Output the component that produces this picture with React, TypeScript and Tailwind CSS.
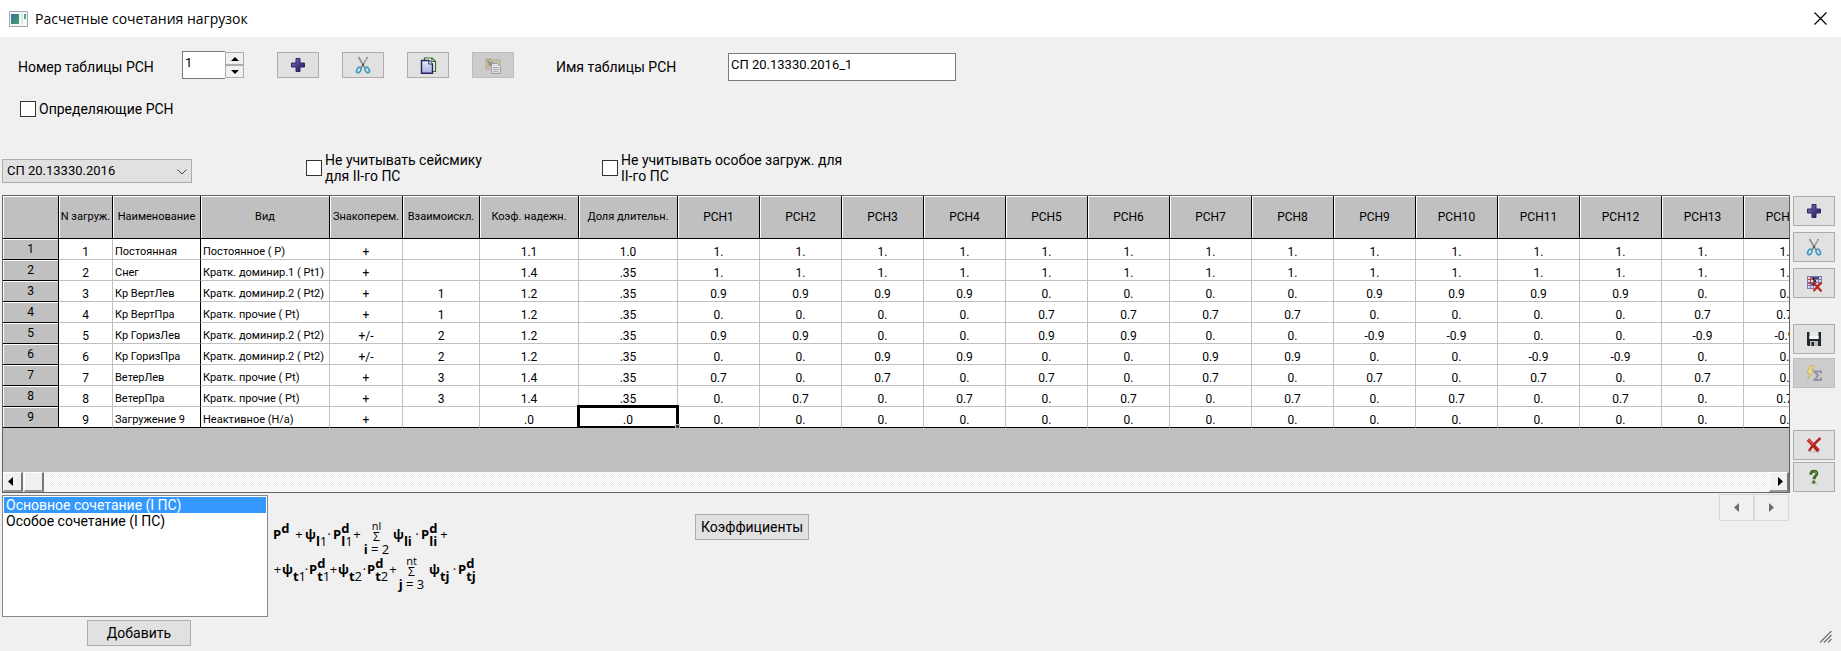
import type { ReactNode } from "react";

const columns = [
  { title: "N загруж.", width: "w-[54px]" },
  { title: "Наименование", width: "w-[88px]" },
  { title: "Вид", width: "w-[129px]" },
  { title: "Знакоперем.", width: "w-[73px]" },
  { title: "Взаимоискл.", width: "w-[77px]" },
  { title: "Коэф. надежн.", width: "w-[99px]" },
  { title: "Доля длительн.", width: "w-[99px]" },
];

const combos = Array.from({ length: 14 }, (_, i) => `РСН${i + 1}`);

const rows = [
  {
    info: ["Постоянная", "Постоянное ( P)", "+", "", "1.1", "1.0"],
    values: ["1.", "1.", "1.", "1.", "1.", "1.", "1.", "1.", "1.", "1.", "1.", "1.", "1.", "1."],
  },
  {
    info: ["Снег", "Кратк. доминир.1 ( Pt1)", "+", "", "1.4", ".35"],
    values: ["1.", "1.", "1.", "1.", "1.", "1.", "1.", "1.", "1.", "1.", "1.", "1.", "1.", "1."],
  },
  {
    info: ["Кр ВертЛев", "Кратк. доминир.2 ( Pt2)", "+", "1", "1.2", ".35"],
    values: ["0.9", "0.9", "0.9", "0.9", "0.", "0.", "0.", "0.", "0.9", "0.9", "0.9", "0.9", "0.", "0."],
  },
  {
    info: ["Кр ВертПра", "Кратк. прочие ( Pt)", "+", "1", "1.2", ".35"],
    values: ["0.", "0.", "0.", "0.", "0.7", "0.7", "0.7", "0.7", "0.", "0.", "0.", "0.", "0.7", "0.7"],
  },
  {
    info: ["Кр ГоризЛев", "Кратк. доминир.2 ( Pt2)", "+/-", "2", "1.2", ".35"],
    values: ["0.9", "0.9", "0.", "0.", "0.9", "0.9", "0.", "0.", "-0.9", "-0.9", "0.", "0.", "-0.9", "-0.9"],
  },
  {
    info: ["Кр ГоризПра", "Кратк. доминир.2 ( Pt2)", "+/-", "2", "1.2", ".35"],
    values: ["0.", "0.", "0.9", "0.9", "0.", "0.", "0.9", "0.9", "0.", "0.", "-0.9", "-0.9", "0.", "0."],
  },
  {
    info: ["ВетерЛев", "Кратк. прочие ( Pt)", "+", "3", "1.4", ".35"],
    values: ["0.7", "0.", "0.7", "0.", "0.7", "0.", "0.7", "0.", "0.7", "0.", "0.7", "0.", "0.7", "0."],
  },
  {
    info: ["ВетерПра", "Кратк. прочие ( Pt)", "+", "3", "1.4", ".35"],
    values: ["0.", "0.7", "0.", "0.7", "0.", "0.7", "0.", "0.7", "0.", "0.7", "0.", "0.7", "0.", "0.7"],
  },
  {
    info: ["Загружение 9", "Неактивное (Н/а)", "+", "", ".0", ".0"],
    values: ["0.", "0.", "0.", "0.", "0.", "0.", "0.", "0.", "0.", "0.", "0.", "0.", "0.", "0."],
  },
];

function PlusIcon() {
  return (
    <svg width="16" height="16" viewBox="0 0 16 16">
      <defs>
        <linearGradient id="plus" x1="0" y1="0" x2="1" y2="1">
          <stop offset="0" stopColor="#8d86c4" />
          <stop offset="0.5" stopColor="#463c86" />
          <stop offset="1" stopColor="#221a52" />
        </linearGradient>
      </defs>
      <path d="M6 1.5h4V6h4.500v4H10v4.500H6V10H1.500V6H6z" fill="url(#plus)" stroke="#2f2765" />
    </svg>
  );
}

function ScissorsIcon() {
  return (
    <svg width="16" height="18" viewBox="0 0 16 18" fill="none">
      <path d="M3.500 1 L10 12" stroke="#8b8f90" strokeWidth="1.600" />
      <path d="M12.500 1 L6 12" stroke="#6e7072" strokeWidth="1.400" />
      <path d="M12 1.500 L8.500 7" stroke="#c9cccc" strokeWidth="0.800" />
      <ellipse cx="3.800" cy="14" rx="1.900" ry="2.900" transform="rotate(28 3.800 14)" stroke="#3f9cc0" strokeWidth="1.700" />
      <ellipse cx="12.200" cy="14" rx="1.900" ry="2.900" transform="rotate(-28 12.200 14)" stroke="#3f9cc0" strokeWidth="1.700" />
      <circle cx="8" cy="9" r="1" fill="#4b4d4e" />
    </svg>
  );
}

function CopyIcon() {
  return (
    <svg width="17" height="17" viewBox="0 0 17 17">
      <defs>
        <linearGradient id="page" x1="0" y1="0" x2="0" y2="1">
          <stop offset="0" stopColor="#e6e8f8" />
          <stop offset="1" stopColor="#a9b4e0" />
        </linearGradient>
      </defs>
      <path d="M4.500 1H12l3.500 3.500v10H4.500z" fill="#f3f7f0" stroke="#2f6b2f" strokeWidth="1.200" />
      <path d="M11.800 1v3.500h3.700" fill="none" stroke="#2f6b2f" />
      <path d="M1.500 3.500H9l3.500 3.500v9.200h-11z" fill="url(#page)" stroke="#262266" strokeWidth="1.400" />
      <path d="M8.800 3.500V7h3.700" fill="#fff" stroke="#262266" />
    </svg>
  );
}

function PasteIcon() {
  return (
    <svg width="17" height="17" viewBox="0 0 17 17">
      <path d="M1 2h5l1 1h8v9H1z" fill="#c9c0a2" stroke="#b3aa90" />
      <path d="M1 1.500h5v1.500H1z" fill="#a9a497" />
      <path d="M2.500 4l4 4M7 4.500V8H3.500" stroke="#777" strokeWidth="1.200" fill="none" />
      <path d="M6.500 6.500h6l3 3v7h-9z" fill="#dfdfe6" stroke="#9c9caa" />
      <path d="M8 10.500h6M8 12.500h6M8 14.500h5" stroke="#a9a9b4" />
    </svg>
  );
}

function TableDeleteIcon() {
  return (
    <svg width="17" height="17" viewBox="0 0 17 17" fill="none">
      <path d="M1 1h14v12H1z" fill="#dcdcec" />
      <path d="M1 1.500h15M1 4.500h15M1 7.500h15M1 10.500h12M1 13.500h7M1.500 1v13M4.500 1v13M7.500 1v13M12.500 1v9M15.500 1v8" stroke="#7c79a8" />
      <path d="M2 4.500h4M4.500 2v7M2 8.500h4" stroke="#d4362c" />
      <path d="M13 3H6.500l3 3-3 3.500H10" stroke="#25214f" strokeWidth="1.500" />
      <path d="M7.500 7.500l8 9M15.500 7.500l-8 8.500" stroke="#b8261c" strokeWidth="2.200" />
    </svg>
  );
}

function SaveIcon() {
  return (
    <svg width="16" height="16" viewBox="0 0 16 16">
      <path d="M1 1h14v14H2l-1-1z" fill="#23262b" />
      <path d="M3.500 1h9v7h-9z" fill="#e4eaec" />
      <path d="M3.500 5h9v3h-9z" fill="#f7f9f9" />
      <path d="M4 10h8v5H4z" fill="#b9c0c4" />
      <path d="M5.500 11h2.500v4H5.500z" fill="#23262b" />
    </svg>
  );
}

function SumIcon() {
  return (
    <svg width="17" height="17" viewBox="0 0 17 17">
      <path d="M4 1h4L5.500 5.500H8L1.500 15l2-7H1z" fill="#f0dc86" stroke="#c5b271" />
      <path d="M15 8.500V6.500H8.500L12 10.500l-3.500 4.500H15V12.500" fill="none" stroke="#9494a2" strokeWidth="2" />
    </svg>
  );
}

function DeleteIcon() {
  return (
    <svg width="18" height="18" viewBox="0 0 18 18" fill="none">
      <ellipse cx="9" cy="15.500" rx="6" ry="1" fill="#c9c9c9" />
      <path d="M3 3.500 L13.500 15" stroke="#b2251d" strokeWidth="3.600" />
      <path d="M15.500 2 C11 6 7 10 4 15" stroke="#b2251d" strokeWidth="2.400" />
      <path d="M3.500 3.500 L8 8.500" stroke="#dd6156" strokeWidth="1.200" />
    </svg>
  );
}

function HelpIcon() {
  return (
    <svg width="16" height="16" viewBox="0 0 16 16" fill="none">
      <ellipse cx="8" cy="14.500" rx="4.500" ry="1" fill="#cbcbcb" />
      <path d="M5 5.800C4.600 3 6 2.200 8 2.200c2.200 0 3 1.200 2.700 2.800C10.400 7 8 7.200 8 10.200" stroke="#3f6b26" strokeWidth="3" />
      <path d="M8.500 2.500c1.500.3 2 1.500 1.200 3" stroke="#86b060" />
      <circle cx="7.800" cy="13" r="1.800" fill="#4c7a30" />
    </svg>
  );
}

function Arrow({ dir, color = "#000" }: { dir: "up" | "down" | "left" | "right"; color?: string }) {
  const points = {
    up: "0,4 4,0 8,4",
    down: "0,0 8,0 4,4",
    left: "5,0 5,9 0,4.5",
    right: "0,0 5,4.5 0,9",
  };
  const vertical = dir === "up" || dir === "down";
  return (
    <svg width={vertical ? 8 : 5} height={vertical ? 4 : 9}>
      <polygon points={points[dir]} fill={color} />
    </svg>
  );
}

function IconButton({
  label,
  disabled = false,
  className = "h-[26px]",
  children,
}: {
  label: string;
  disabled?: boolean;
  className?: string;
  children: ReactNode;
}) {
  return (
    <button
      type="button"
      aria-label={label}
      disabled={disabled}
      className={`flex w-[42px] shrink-0 items-center justify-center border ${
        disabled ? "border-[#bfbfbf] bg-[#cccccc]" : "border-[#adadad] bg-[#e1e1e1]"
      } ${className}`}
    >
      {children}
    </button>
  );
}

function Checkbox({ id, children }: { id: string; children: ReactNode }) {
  return (
    <div className="flex items-center gap-[3px]">
      <input
        id={id}
        type="checkbox"
        className="size-4 shrink-0 appearance-none border border-[#333333] bg-white checked:bg-[#333333]"
      />
      <label htmlFor={id} className="leading-4 whitespace-nowrap">
        {children}
      </label>
    </div>
  );
}

function Term({ base, sup, sub, className }: { base: string; sup?: string; sub?: ReactNode; className: string }) {
  return (
    <span className={`flex shrink-0 items-center font-bold ${className}`}>
      {base}
      <span className="flex h-[26px] flex-col justify-between leading-[13px]">
        <span className="h-[13px]">{sup}</span>
        <span className="h-[13px]">{sub}</span>
      </span>
    </span>
  );
}

function Sum({ top, index, from }: { top: string; index: string; from: string }) {
  return (
    <span className="flex w-[27px] shrink-0 flex-col items-center pt-[6px] text-[11px] leading-[11px]">
      <span>{top}</span>
      <span className="text-xs leading-[12px]">Σ</span>
      <span className="text-[13px] leading-[13px] whitespace-nowrap">
        <b>{index}</b> = {from}
      </span>
    </span>
  );
}

function Op({ children, className }: { children: ReactNode; className: string }) {
  return <span className={`shrink-0 text-center ${className}`}>{children}</span>;
}

function Formula() {
  const n = (v: string) => <span className="font-normal">{v}</span>;
  return (
    <div className="mt-[24px] ml-[5px] w-[210px] font-['Open_Sans',sans-serif] text-[13px]">
      <div className="flex h-[35px] items-center">
        <Term base="P" sup="d" className="w-[20px]" />
        <Op className="w-[12px]">+</Op>
        <Term base="ψ" sub={<>l{n("1")}</>} className="w-[20px]" />
        <Op className="w-[8px]">·</Op>
        <Term base="P" sup="d" sub={<>l{n("1")}</>} className="w-[18px]" />
        <Op className="w-[12px]">+</Op>
        <Sum top="nl" index="i" from="2" />
        <Term base="ψ" sub="li" className="ml-[3px] w-[20px]" />
        <Op className="w-[8px]">·</Op>
        <Term base="P" sup="d" sub="li" className="w-[18px]" />
        <Op className="w-[10px]">+</Op>
      </div>
      <div className="flex h-[35px] items-center">
        <Op className="w-[9px]">+</Op>
        <Term base="ψ" sub={<>t{n("1")}</>} className="w-[22px]" />
        <Op className="w-[5px]">·</Op>
        <Term base="P" sup="d" sub={<>t{n("1")}</>} className="w-[20px]" />
        <Op className="w-[9px]">+</Op>
        <Term base="ψ" sub={<>t{n("2")}</>} className="w-[24px]" />
        <Op className="w-[5px]">·</Op>
        <Term base="P" sup="d" sub={<>t{n("2")}</>} className="w-[21px]" />
        <Op className="w-[10px]">+</Op>
        <Sum top="nt" index="j" from="3" />
        <Term base="ψ" sub="tj" className="ml-[4px] w-[22px]" />
        <Op className="w-[7px]">·</Op>
        <Term base="P" sup="d" sub="tj" className="w-[18px]" />
      </div>
    </div>
  );
}

function LoadTable() {
  const head =
    "border-r border-b border-black bg-[#c0c0c0] p-0 font-normal shadow-[inset_1px_1px_0_#fff]";
  return (
    <table className="w-[1823px] table-fixed border-separate border-spacing-0 text-xs whitespace-nowrap">
      <thead>
        <tr className="h-[43px]">
          <th className={`w-[56px] ${head}`} />
          {columns.map((c) => (
            <th key={c.title} scope="col" className={`text-[11px] ${c.width} ${head}`}>
              {c.title}
            </th>
          ))}
          {combos.map((c) => (
            <th key={c} scope="col" className={`w-[82px] ${head}`}>
              {c}
            </th>
          ))}
        </tr>
      </thead>
      <tbody>
        {rows.map((row, r) => {
          const last = r === rows.length - 1;
          const line = last ? "border-b-black" : "border-b-[#c0c0c0]";
          return (
            <tr key={r} className="h-[21px] leading-[14px]">
              <th scope="row" className={head}>
                {r + 1}
              </th>
              {[String(r + 1), ...row.info, ...row.values].map((value, c) => {
                const text = c === 1 || c === 2;
                const active = last && c === 6;
                return (
                  <td
                    key={c}
                    className={`relative border-r border-b bg-white px-0 pt-[6px] pb-0 ${line} ${
                      c === 1 ? "border-r-black" : "border-r-[#c0c0c0]"
                    } ${text ? "pl-[2px] text-left text-[11px]" : "text-center"}`}
                  >
                    {value}
                    {active && (
                      <span className="absolute -top-[2px] -right-[2px] -bottom-[1px] -left-[2px] z-10 border-[3px] border-b-2 border-black">
                        <span className="absolute -right-[4px] -bottom-[3px] size-[5px] border border-[#c0c0c0] bg-[#333333]" />
                      </span>
                    )}
                  </td>
                );
              })}
            </tr>
          );
        })}
      </tbody>
    </table>
  );
}

export default function App() {
  const scrollButton =
    "flex h-full w-[20px] shrink-0 items-center border border-r-2 border-b-2 border-t-white border-r-[#777777] border-b-[#999999] border-l-white bg-[#f0f0f0]";
  return (
    <div className="flex min-h-screen flex-col overflow-hidden bg-[#f0f0f0] font-[Roboto,'Liberation_Sans',sans-serif] text-sm text-black">
      <header className="flex h-[37px] items-center bg-white pr-[13px] pl-[9px]">
        <svg width="19" height="16" viewBox="0 0 19 16">
          <defs>
            <linearGradient id="app" x1="0" y1="0" x2="1" y2="1">
              <stop offset="0" stopColor="#3c6fa0" />
              <stop offset="1" stopColor="#3fa06a" />
            </linearGradient>
          </defs>
          <path d="M.5.5h18v15H.5z" fill="#f4f6f7" stroke="#9aa7b0" />
          <path d="M2 3h8v10H2z" fill="url(#app)" />
          <path d="M12 3h2v10h-2z" fill="#dfe6e8" />
          <path d="M15 3h2v5h-2z" fill="#57a77a" />
        </svg>
        <h1 className="ml-[7px] font-['Open_Sans',sans-serif] text-sm leading-5">Расчетные сочетания нагрузок</h1>
        <button type="button" aria-label="Закрыть" className="ml-auto flex size-4 items-center justify-center">
          <svg width="13" height="13" viewBox="0 0 13 13" fill="none" stroke="#000" strokeWidth="1.200">
            <path d="M.5.5l12 12M12.500.5l-12 12" />
          </svg>
        </button>
      </header>

      <div className="flex h-[60px] items-start pt-[14px] pl-[18px]">
        <label htmlFor="number" className="mt-[6px] w-[164px] leading-5">
          Номер таблицы РСН
        </label>
        <input
          id="number"
          defaultValue="1"
          className="h-[28px] w-[43px] border border-r-0 border-[#7a7a7a] bg-white pb-[6px] pl-[2px] text-[13px]"
        />
        <div className="mt-px flex w-[19px] flex-col">
          <button type="button" aria-label="Больше" className="flex h-[13px] items-center justify-center border border-[#adadad] bg-[#f0f0f0]">
            <Arrow dir="up" />
          </button>
          <button type="button" aria-label="Меньше" className="flex h-[13px] items-center justify-center border border-[#adadad] bg-[#f0f0f0]">
            <Arrow dir="down" />
          </button>
        </div>
        <div className="mt-px ml-[33px] flex gap-[23px]">
          <IconButton label="Добавить таблицу">
            <PlusIcon />
          </IconButton>
          <IconButton label="Вырезать">
            <ScissorsIcon />
          </IconButton>
          <IconButton label="Копировать">
            <CopyIcon />
          </IconButton>
          <IconButton label="Вставить" disabled>
            <PasteIcon />
          </IconButton>
        </div>
        <label htmlFor="name" className="mt-[6px] ml-[42px] w-[172px] leading-5">
          Имя таблицы РСН
        </label>
        <input
          id="name"
          defaultValue="СП 20.13330.2016_1"
          className="mt-[2px] h-[28px] w-[228px] border border-[#7a7a7a] bg-white pb-[6px] pl-[2px] text-[13px]"
        />
      </div>

      <div className="mt-1 ml-[20px]">
        <Checkbox id="defining">Определяющие РСН</Checkbox>
      </div>

      <div className="mt-[35px] flex h-[43px] items-start pl-[2px]">
        <div className="relative mt-[7px] w-[190px]">
          <select aria-label="Нормы" className="h-[24px] w-full appearance-none border border-[#adadad] bg-[#e1e1e1] pl-1 text-[13px]">
            <option>СП 20.13330.2016</option>
          </select>
          <svg width="10" height="6" className="pointer-events-none absolute top-[10px] right-[5px]" fill="none" stroke="#444">
            <path d="M.5.5L5 5 9.500.5" />
          </svg>
        </div>
        <div className="ml-[114px] w-[296px]">
          <Checkbox id="seismic">
            Не учитывать сейсмику
            <br />
            для II-го ПС
          </Checkbox>
        </div>
        <Checkbox id="special">
          Не учитывать особое загруж. для
          <br />
          II-го ПС
        </Checkbox>
      </div>

      <div className="flex pr-[6px] pl-[2px]">
        <div className="flex h-[298px] min-w-0 flex-1 flex-col border border-[#646464] bg-[#c0c0c0]">
          <div className="flex-1 overflow-hidden">
            <LoadTable />
          </div>
          <div className="flex h-[20px] bg-[repeating-conic-gradient(#ffffff_0_25%,#ededed_0_50%)] bg-[length:2px_2px]">
            <button type="button" aria-label="Влево" className={`pl-1 ${scrollButton}`}>
              <Arrow dir="left" />
            </button>
            <div className={`ml-px ${scrollButton}`} />
            <button type="button" aria-label="Вправо" className={`ml-auto justify-end pr-1 ${scrollButton}`}>
              <Arrow dir="right" />
            </button>
          </div>
        </div>
        <div className="ml-[3px] flex flex-col pt-px">
          <IconButton label="Добавить столбец" className="h-[30px]">
            <PlusIcon />
          </IconButton>
          <IconButton label="Удалить столбец" className="mt-[6px] h-[30px]">
            <ScissorsIcon />
          </IconButton>
          <IconButton label="Очистить таблицу" className="mt-[6px] h-[30px]">
            <TableDeleteIcon />
          </IconButton>
          <IconButton label="Сохранить" className="mt-[26px] h-[30px]">
            <SaveIcon />
          </IconButton>
          <IconButton label="Расчет" disabled className="mt-1 h-[30px]">
            <SumIcon />
          </IconButton>
          <IconButton label="Отмена" className="mt-auto h-[30px]">
            <DeleteIcon />
          </IconButton>
          <IconButton label="Справка" className="mt-[2px] mb-px h-[30px]">
            <HelpIcon />
          </IconButton>
        </div>
      </div>

      <div className="flex flex-1 items-start pl-[2px]">
        <div className="mt-[2px] w-[266px]">
          <ul role="listbox" aria-label="Сочетания" className="h-[122px] border border-[#828790] bg-white p-px leading-4">
            <li role="option" aria-selected="true" className="bg-[#3399ff] pl-[2px] text-white">
              Основное сочетание (I ПС)
            </li>
            <li role="option" aria-selected="false" className="pl-[2px]">
              Особое сочетание (I ПС)
            </li>
          </ul>
          <button type="button" className="mt-[3px] ml-[85px] flex h-[26px] w-[104px] items-center justify-center border border-[#adadad] bg-[#e1e1e1]">
            Добавить
          </button>
        </div>
        <Formula />
        <button type="button" className="mt-[21px] ml-[212px] flex h-[26px] w-[114px] items-center justify-center border border-[#adadad] bg-[#e1e1e1]">
          Коэффициенты
        </button>
        <div className="ml-auto flex flex-col items-end self-stretch">
          <div className="mt-px mr-[52px] flex">
            <button type="button" aria-label="Назад" className="flex h-[27px] w-[35px] items-center justify-center border border-[#d9d9d9]">
              <Arrow dir="left" color="#6d6d6d" />
            </button>
            <button type="button" aria-label="Вперед" className="flex h-[27px] w-[35px] items-center justify-center border border-[#d9d9d9]">
              <Arrow dir="right" color="#6d6d6d" />
            </button>
          </div>
          <svg width="12" height="12" className="mt-auto mr-[9px] mb-[8px]" stroke="#777" strokeWidth="1.400" fill="none">
            <path d="M0 11.500L11.500 0M4 11.500L11.500 4M8 11.500L11.500 8" />
          </svg>
        </div>
      </div>
    </div>
  );
}
